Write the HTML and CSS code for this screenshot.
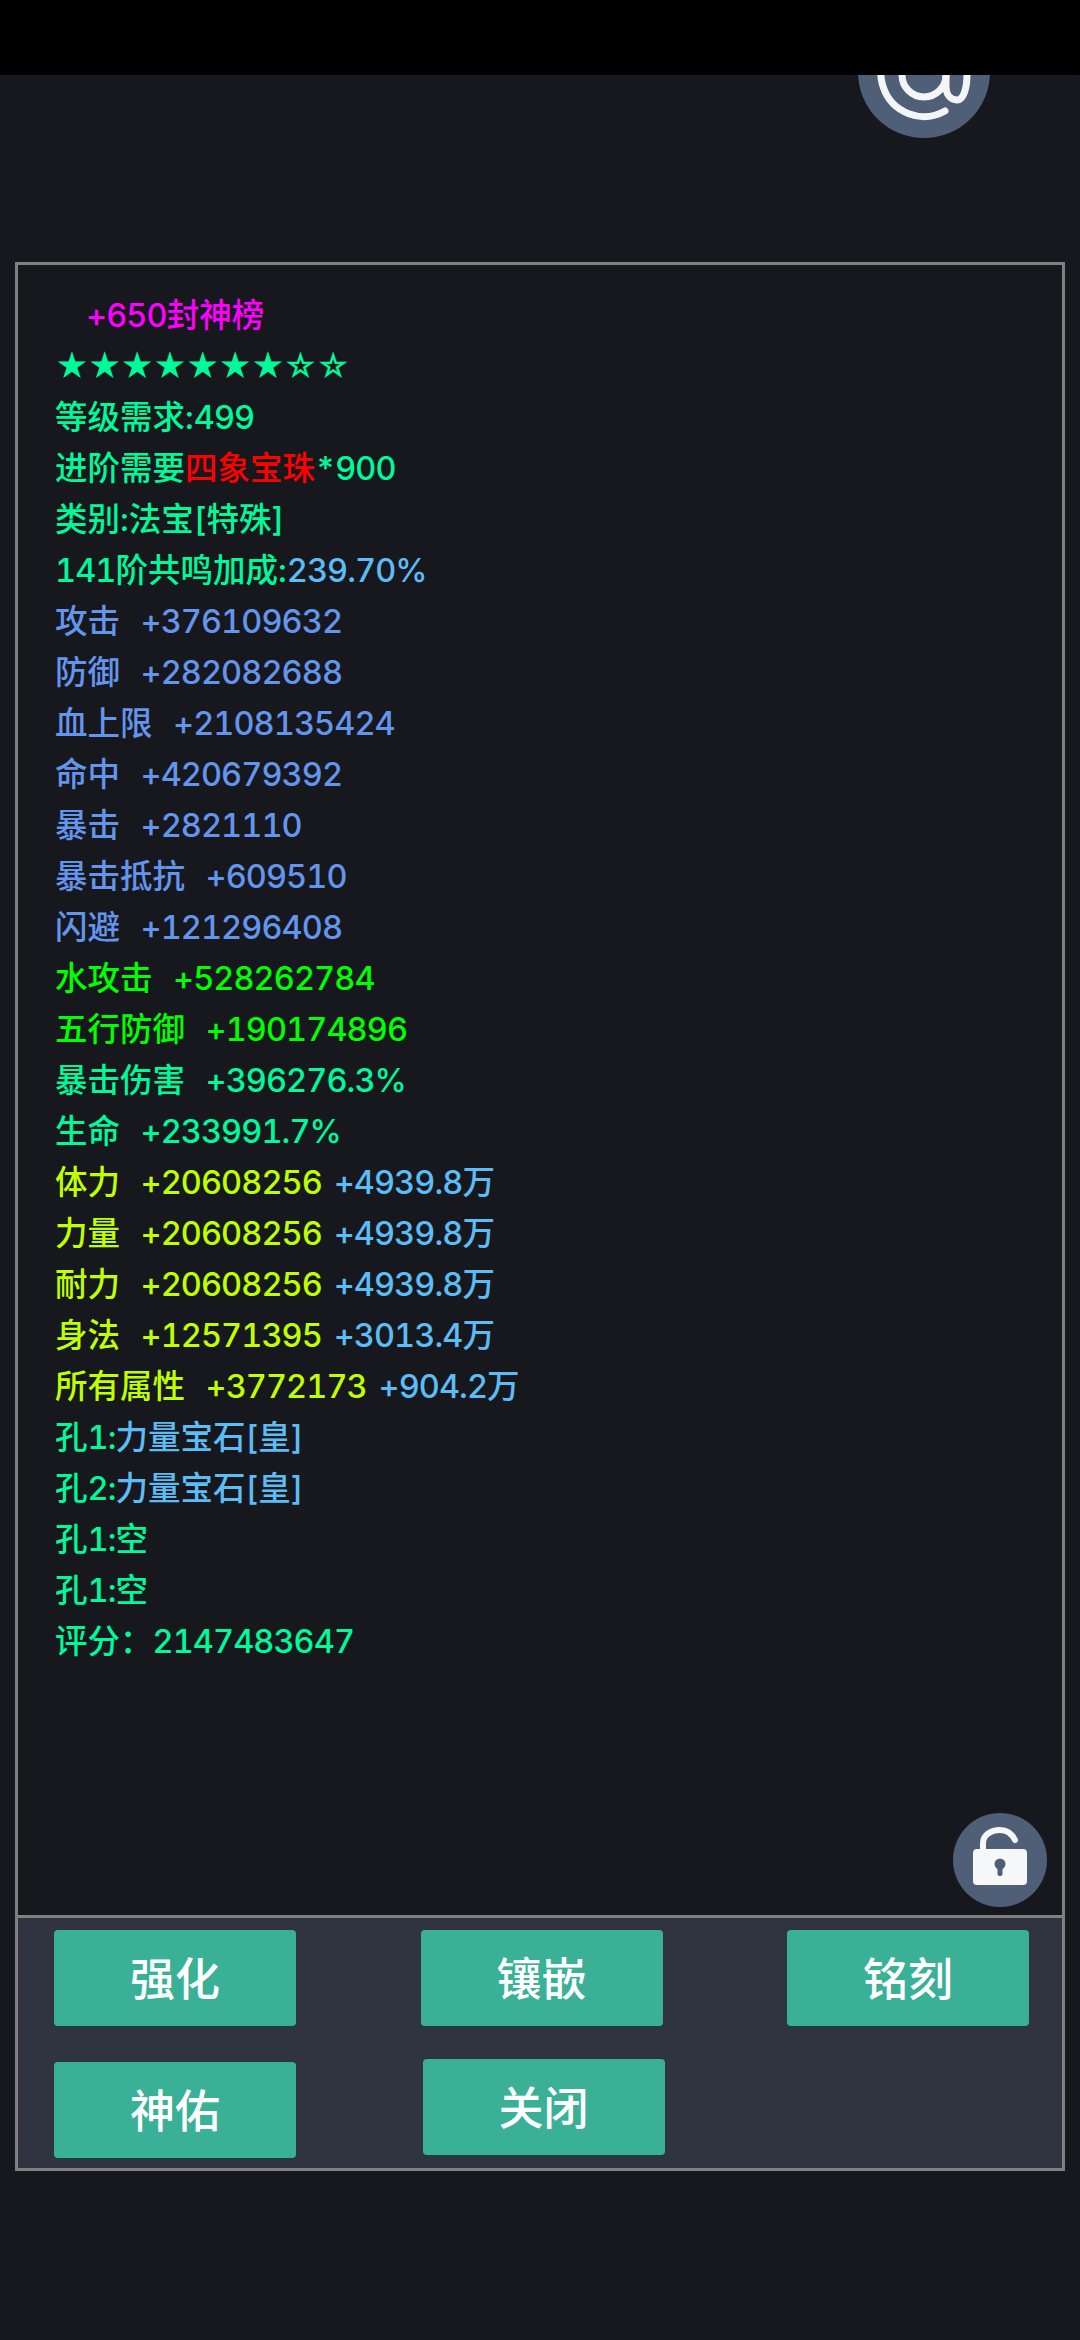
FILE: index.html
```html
<!DOCTYPE html>
<html lang="en">
<head>
  <meta charset="UTF-8">
  <title>Item detail</title>
  <link rel="stylesheet" href="styles.css">
</head>
<body>

  <div class="statusbar"></div>

  <div class="topbar">
    <div class="at-btn">
      <svg width="132" height="132" viewBox="0 0 132 132" fill="none" stroke="#f4f5f7" stroke-width="7" stroke-linecap="round" stroke-linejoin="round">
        <circle cx="66" cy="69" r="22"/>
        <path d="M87 105A43 43 0 1 1 109 68C109 84 105 94 99 94C92 94 88 88 88 80V48"/>
      </svg>
    </div>
  </div>

  <div class="panel">
    <div class="info">
      <div class="line title"><span class="num">+650</span>封神榜</div>
      <div class="line stars">★★★★★★★☆☆</div>
      <div class="line">等级需求:<span class="num">499</span></div>
      <div class="line">进阶需要<span class="red">四象宝珠</span><span class="num">*900</span></div>
      <div class="line">类别:法宝[特殊]</div>
      <div class="line"><span class="num">141</span>阶共鸣加成:<span class="sky num">239.70%</span></div>
      <div class="line blue">攻击&nbsp; <span class="val">+376109632</span></div>
      <div class="line blue">防御&nbsp; <span class="val">+282082688</span></div>
      <div class="line blue">血上限&nbsp; <span class="val">+2108135424</span></div>
      <div class="line blue">命中&nbsp; <span class="val">+420679392</span></div>
      <div class="line blue">暴击&nbsp; <span class="val">+2821110</span></div>
      <div class="line blue">暴击抵抗&nbsp; <span class="val">+609510</span></div>
      <div class="line blue">闪避&nbsp; <span class="val">+121296408</span></div>
      <div class="line lime">水攻击&nbsp; <span class="val">+528262784</span></div>
      <div class="line lime">五行防御&nbsp; <span class="val">+190174896</span></div>
      <div class="line">暴击伤害&nbsp; <span class="val">+396276.3%</span></div>
      <div class="line">生命&nbsp; <span class="val">+233991.7%</span></div>
      <div class="line yellow">体力&nbsp; <span class="val">+20608256</span> <span class="val sky">+4939.8</span><span class="sky">万</span></div>
      <div class="line yellow">力量&nbsp; <span class="val">+20608256</span> <span class="val sky">+4939.8</span><span class="sky">万</span></div>
      <div class="line yellow">耐力&nbsp; <span class="val">+20608256</span> <span class="val sky">+4939.8</span><span class="sky">万</span></div>
      <div class="line yellow">身法&nbsp; <span class="val">+12571395</span> <span class="val sky">+3013.4</span><span class="sky">万</span></div>
      <div class="line yellow">所有属性&nbsp; <span class="val">+3772173</span> <span class="val sky">+904.2</span><span class="sky">万</span></div>
      <div class="line">孔<span class="num">1:</span><span class="sky">力量宝石[皇]</span></div>
      <div class="line">孔<span class="num">2:</span><span class="sky">力量宝石[皇]</span></div>
      <div class="line">孔<span class="num">1:</span>空</div>
      <div class="line">孔<span class="num">1:</span>空</div>
      <div class="line">评分：<span class="num">2147483647</span></div>

      <div class="lock-btn">
        <svg width="56" height="60" viewBox="0 0 56 60">
          <path d="M11 24V16C11 8 19 3 28 3C35 3 40 7 43 13" fill="none" stroke="#f6f7f9" stroke-width="6" stroke-linecap="round"/>
          <rect x="1" y="22" width="54" height="36" rx="4" fill="#f6f7f9"/>
          <circle cx="28" cy="37" r="5.5" fill="#4f5f78"/>
          <rect x="25.500" y="38" width="5" height="11" rx="2" fill="#4f5f78"/>
        </svg>
      </div>
    </div>

    <div class="actions">
      <button class="btn">强化</button>
      <button class="btn">镶嵌</button>
      <button class="btn">铭刻</button>
      <button class="btn">神佑</button>
      <button class="btn close">关闭</button>
    </div>
  </div>

</body>
</html>
```

FILE: styles.css
```css
* {
  box-sizing: border-box;
}

html, body {
  margin: 0;
  height: 100%;
}

body {
  width: 1080px;
  height: 2340px;
  overflow: hidden;
  background-color: #16181d;
  font-family: Inter, "Noto Sans CJK SC", sans-serif;
}

.statusbar {
  position: relative;
  z-index: 2;
  height: 75px;
  background-color: #000;
}

.topbar {
  height: 187px;
  position: relative;
}

.at-btn {
  position: absolute;
  left: 858px;
  top: -69px;
  width: 132px;
  height: 132px;
  border-radius: 50%;
  background-color: #4f5f78;
}

.at-btn svg {
  display: block;
}

.panel {
  margin-left: 15px;
  width: 1050px;
  height: 1909px;
  display: flex;
  flex-direction: column;
  border: 3px solid #808080;
}

.info {
  position: relative;
  flex: 1;
  padding: 25px 0 0 37px;
}

.line {
  height: 51px;
  line-height: 51px;
  font-size: 32.5px;
  font-weight: 500;
  font-variant-numeric: tabular-nums;
  color: #00fa9a;
  white-space: nowrap;
}

.num, .val {
  letter-spacing: -0.9px;
}

.val {
  margin-left: 3px;
}

.title {
  padding-left: 31px;
  color: #ff00ff;
}

.stars {
  font-weight: 400;
  letter-spacing: -1.3px;
}

.red {
  color: #ff0000;
}

.sky {
  color: #5cbcf5;
}

.blue {
  color: #6495ed;
}

.lime {
  color: #00ff00;
}

.yellow {
  color: #bfff00;
}

.lock-btn {
  position: absolute;
  right: 15px;
  bottom: 8px;
  width: 94px;
  height: 94px;
  border-radius: 50%;
  background-color: #4f5f78;
  display: flex;
  align-items: center;
  justify-content: center;
}

.lock-btn svg {
  margin-bottom: 6px;
}

.actions {
  height: 253px;
  border-top: 3px solid #808080;
  background-color: #2f3440;
  padding: 12px 33px 0 36px;
  display: grid;
  grid-template-columns: 242px 242px 242px;
  grid-template-rows: 96px 96px;
  justify-content: space-between;
  row-gap: 36px;
}

.btn {
  border: none;
  border-radius: 4px;
  background-color: #3ab197;
  box-shadow: 0 1px 0 #11463d;
  color: #fff;
  font-family: inherit;
  font-size: 45px;
  font-weight: 500;
  padding: 0 0 3px;
}

.close {
  transform: translate(2px, -3px);
}
```
